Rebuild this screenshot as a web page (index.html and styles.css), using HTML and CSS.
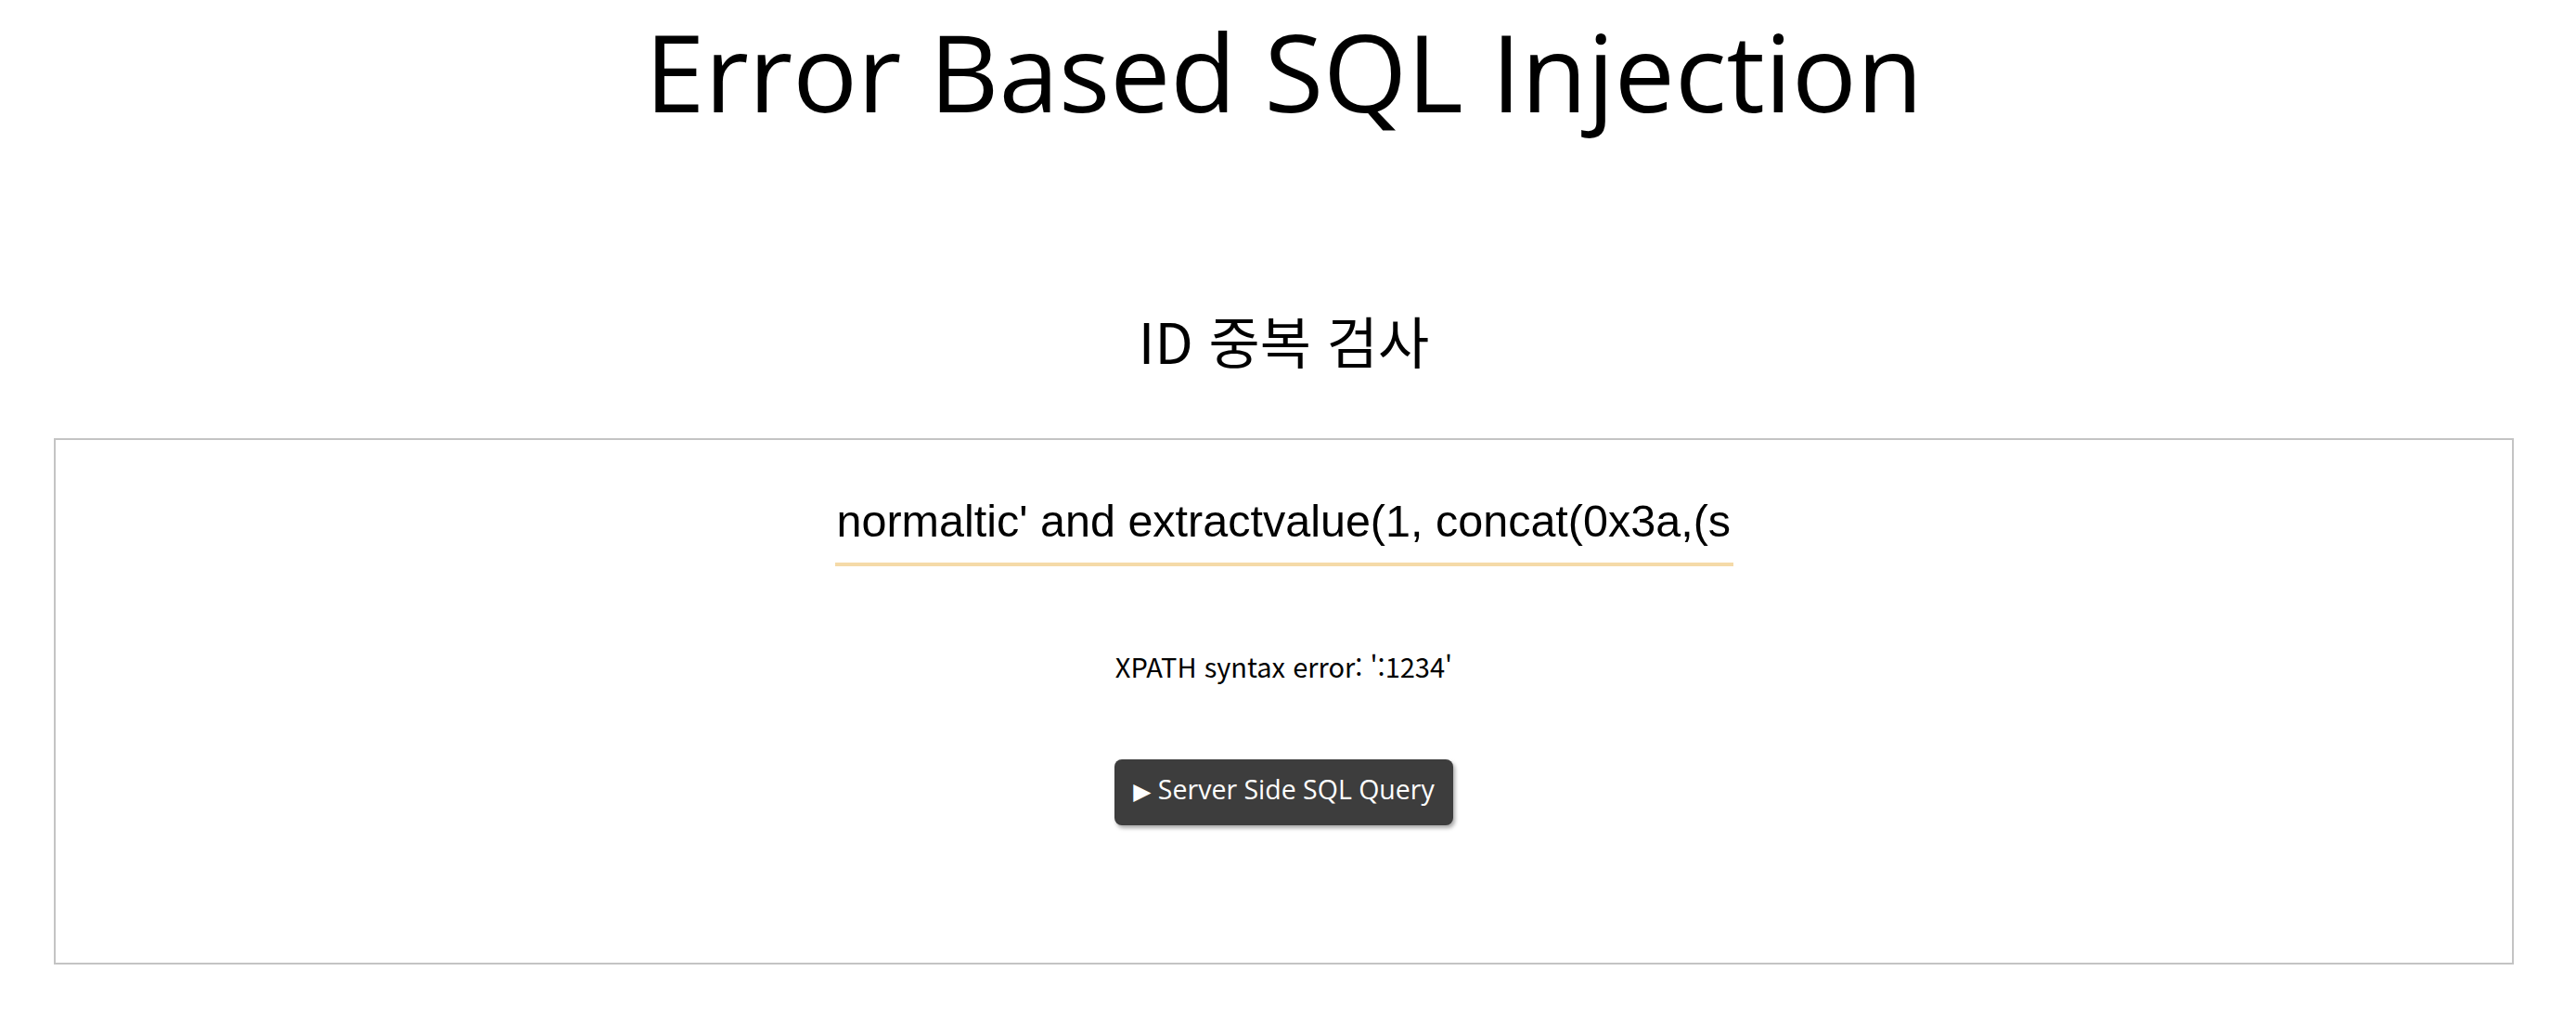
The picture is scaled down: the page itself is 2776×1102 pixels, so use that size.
FILE: index.html
```html
<!DOCTYPE html>
<html lang="ko">
<head>
<meta charset="utf-8">
<title>Error Based SQL Injection</title>
<link rel="stylesheet" href="styles.css">
</head>
<body>
<div class="page">
  <h1 class="title">Error Based SQL Injection</h1>
  <h2 class="subtitle">ID 중복 검사</h2>
  <div class="panel">
    <input class="id-input" type="text" value="normaltic' and extractvalue(1, concat(0x3a,(select '1234'))) and '1'='1">
    <p class="result">XPATH syntax error: ':1234'</p>
    <button class="query-btn" type="button"><span class="tri">▶</span> Server Side SQL Query</button>
  </div>
</div>
</body>
</html>
```

FILE: styles.css
```css
html, body {
  margin: 0;
  padding: 0;
  background: #ffffff;
}

.page {
  padding: 0 67px 0 58px;
  font-family: "Noto Sans CJK KR", "Noto Sans", sans-serif;
  color: #000;
  text-align: center;
}

.title {
  margin: 0;
  font-family: "Open Sans", "Noto Sans", sans-serif;
  font-size: 116px;
  line-height: 152px;
  font-weight: 400;
}

.subtitle {
  margin: 174px 0 66px;
  font-size: 60px;
  line-height: 80px;
  font-weight: 400;
}

.panel {
  border: 2px solid #c4c4c4;
  height: 567px;
  box-sizing: border-box;
  padding-top: 56px;
}

.id-input {
  display: block;
  box-sizing: border-box;
  width: 968px;
  margin: 0 auto;
  padding: 4px 2px 18px;
  border: 0;
  border-bottom: 4px solid #f5daa8;
  outline: none;
  background: transparent;
  font-family: "Liberation Sans", Arial, sans-serif;
  font-size: 48.5px;
  line-height: 54px;
  color: #000;
}

.result {
  margin: 87px 0 0;
  font-size: 29px;
  line-height: 40px;
}

.query-btn {
  margin-top: 81px;
  display: inline-block;
  padding: 12px 20px 18px;
  border: 0;
  border-radius: 8px;
  background: #3d3d3d;
  color: #fff;
  font-family: "Open Sans", "Noto Sans", sans-serif;
  font-size: 28.5px;
  line-height: 41px;
  box-shadow: 2px 3px 4px rgba(0, 0, 0, 0.35);
}

.tri {
  font-family: "DejaVu Sans", sans-serif;
  font-size: 25px;
  line-height: 1;
}
```
